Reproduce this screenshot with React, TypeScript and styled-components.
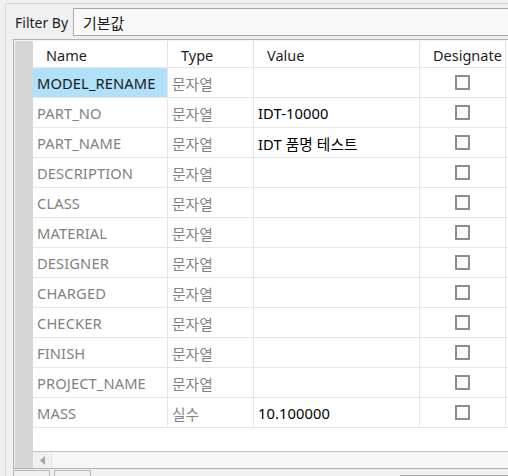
import React from "react";
import styled, { createGlobalStyle } from "styled-components";

const Global = createGlobalStyle`
  html, body { margin: 0; padding: 0; }
  body {
    width: 508px; height: 476px; overflow: hidden;
    background: #f0f0f0;
    font-family: "Noto Sans", "Noto Sans CJK KR", sans-serif;
  }
`;

const Page = styled.div`
  width: 508px;
  height: 476px;
  overflow: hidden;
  box-sizing: border-box;
  padding: 3px 0 0 5px;
  background: #f0f0f0;
`;

const Group = styled.div`
  border-top: 1px solid #d9d9d9;
  border-left: 1px solid #d9d9d9;
  padding: 4px 0 0 7px;
  width: 700px;
  height: 480px;
  box-sizing: border-box;
`;

const FilterRow = styled.div`
  display: flex;
  align-items: center;
  height: 28px;
`;

const Label = styled.span`
  width: 60px;
  padding-left: 2px;
  box-sizing: border-box;
  font-size: 14px;
  color: #1e1e1e;
`;

const Input = styled.div`
  flex: 1;
  height: 28px;
  box-sizing: border-box;
  border: 1px solid #a8a8a8;
  background: #f9f9f9;
  display: flex;
  align-items: center;
  padding-left: 9px;
  font-family: "Noto Sans CJK KR", sans-serif;
  font-size: 15px;
  color: #1a1a1a;
`;

const Frame = styled.div`
  margin-top: 3px;
  border: 1px solid #b2b2b2;
  border-right: none;
  padding: 1px 0 0 1px;
  background: #f4f4f4;
  display: flex;
  height: 430px;
  box-sizing: border-box;
`;

const RowHeaders = styled.div`
  width: 18px;
  flex: none;
  background: #d6d6d6;
`;

const Body = styled.div`
  flex: 1;
  display: flex;
  flex-direction: column;
  background: #ffffff;
`;

const cols = "135px 86px 166px 86px 1fr";

const HeaderRow = styled.div`
  display: grid;
  grid-template-columns: ${cols};
  height: 27px;
  box-sizing: border-box;
  border-bottom: 1px solid #e6e6e6;
`;

const HeaderCell = styled.div`
  border-right: 1px solid #e2e2e2;
  padding: 2px 4px 0 13px;
  display: flex;
  align-items: center;
  font-size: 14.5px;
  color: #1e1e1e;
  white-space: nowrap;
  overflow: hidden;
`;

const Row = styled.div`
  display: grid;
  grid-template-columns: ${cols};
  height: 30px;
  box-sizing: border-box;
  border-bottom: 1px solid #e6e6e6;
`;

const Cell = styled.div<{ $tone?: "dim" | "dark" | "value"; $selected?: boolean; $center?: boolean }>`
  border-right: 1px solid #e6e6e6;
  padding-left: ${(p) => (p.$center ? "0" : "4px")};
  padding-top: 1px;
  display: flex;
  align-items: center;
  justify-content: ${(p) => (p.$center ? "center" : "flex-start")};
  font-family: "Noto Sans", "Noto Sans CJK KR", sans-serif;
  font-size: 14.7px;
  letter-spacing: 0.1px;
  white-space: nowrap;
  overflow: hidden;
  background: ${(p) => (p.$selected ? "#b1e0fb" : "transparent")};
  color: ${(p) =>
    p.$tone === "dark" ? "#1a1a1a" : p.$tone === "value" ? "#000000" : "#828282"};
`;

const Check = styled.span`
  width: 15px;
  height: 15px;
  margin-top: -1px;
  box-sizing: border-box;
  border: 2px solid #8d8d8d;
  background: #fafafa;
`;

const Filler = styled.div`
  flex: 1;
`;

const ScrollBar = styled.div`
  height: 17px;
  box-sizing: border-box;
  border-top: 1px solid #c3c3c3;
  background: #f6f6f6;
  display: flex;
`;

const ScrollButton = styled.div`
  width: 18px;
  box-sizing: border-box;
  margin-left: 1px;
  border-right: 1px solid #e4e4e4;
  background: #f0f0f0;
  display: flex;
  align-items: center;
  justify-content: center;
`;

const TabStrip = styled.div`
  display: flex;
  gap: 4px;
  padding-top: 1px;
`;

const Tab = styled.div`
  width: 35px;
  height: 10px;
  border: 1px solid #b8b8b8;
  border-bottom: none;
  background: #f0f0f0;
`;

const TabRest = styled.div`
  margin-left: 305px;
  width: 200px;
  height: 10px;
  border-top: 1px solid #a8a8a8;
  margin-top: 5px;
`;

type Prop = { name: string; type: string; value: string };

const rows: Prop[] = [
  { name: "MODEL_RENAME", type: "문자열", value: "" },
  { name: "PART_NO", type: "문자열", value: "IDT-10000" },
  { name: "PART_NAME", type: "문자열", value: "IDT 품명 테스트" },
  { name: "DESCRIPTION", type: "문자열", value: "" },
  { name: "CLASS", type: "문자열", value: "" },
  { name: "MATERIAL", type: "문자열", value: "" },
  { name: "DESIGNER", type: "문자열", value: "" },
  { name: "CHARGED", type: "문자열", value: "" },
  { name: "CHECKER", type: "문자열", value: "" },
  { name: "FINISH", type: "문자열", value: "" },
  { name: "PROJECT_NAME", type: "문자열", value: "" },
  { name: "MASS", type: "실수", value: "10.100000" },
];

export default function App() {
  return (
    <Page>
      <Global />
      <Group>
        <FilterRow>
          <Label>Filter By</Label>
          <Input>기본값</Input>
        </FilterRow>
        <Frame>
          <RowHeaders />
          <Body>
            <HeaderRow>
              <HeaderCell>Name</HeaderCell>
              <HeaderCell>Type</HeaderCell>
              <HeaderCell>Value</HeaderCell>
              <HeaderCell>Designate</HeaderCell>
              <HeaderCell />
            </HeaderRow>
            {rows.map((r, i) => (
              <Row key={r.name}>
                <Cell $tone={i === 0 ? "dark" : "dim"} $selected={i === 0}>
                  {r.name}
                </Cell>
                <Cell $tone="dim">{r.type}</Cell>
                <Cell $tone="value">{r.value}</Cell>
                <Cell $center>
                  <Check />
                </Cell>
                <Cell />
              </Row>
            ))}
            <Filler />
            <ScrollBar>
              <ScrollButton>
                <svg width="6" height="9" viewBox="0 0 6 9">
                  <path d="M5 0 L0 4.5 L5 9 Z" fill="#a3a3a3" />
                </svg>
              </ScrollButton>
            </ScrollBar>
          </Body>
        </Frame>
        <TabStrip>
          <Tab />
          <Tab />
          <TabRest />
        </TabStrip>
      </Group>
    </Page>
  );
}
